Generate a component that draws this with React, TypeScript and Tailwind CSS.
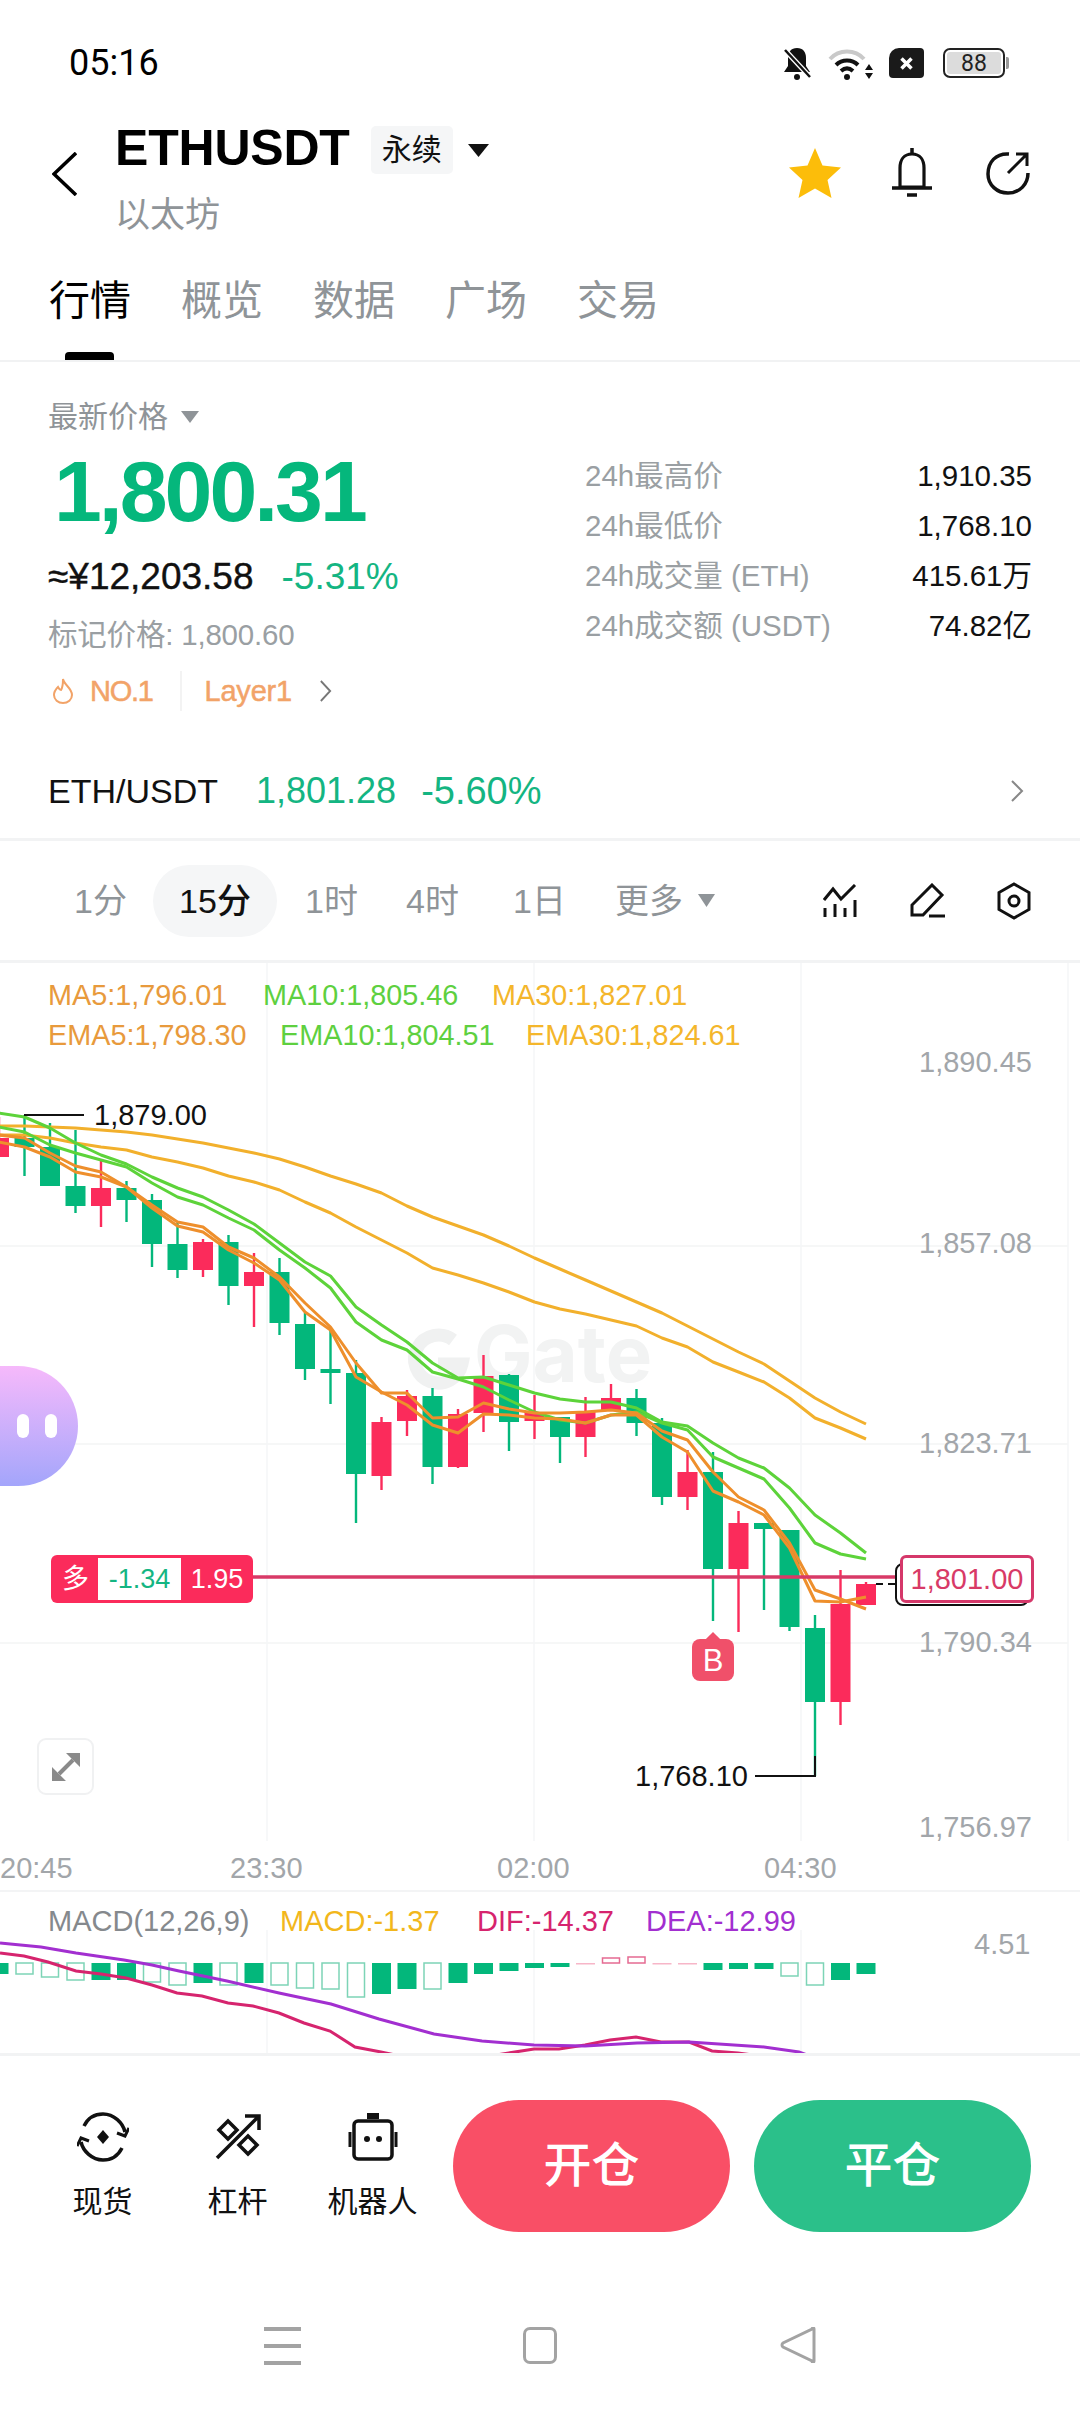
const UP = "#03b77b";
const DOWN = "#fb2b5b";

const slot = (i: number) => i * 25.5 - 1;

// [high, bodyTop, bodyBottom, low, colour]
const candles: [number, number, number, number, "g" | "r"][] = [
  [1117, 1138, 1157, 1157, "r"],
  [1115, 1138, 1147, 1176, "g"],
  [1123, 1147, 1186, 1186, "g"],
  [1130, 1186, 1206, 1213, "g"],
  [1160, 1188, 1206, 1227, "r"],
  [1181, 1188, 1200, 1222, "g"],
  [1194, 1200, 1244, 1267, "g"],
  [1223, 1244, 1270, 1278, "g"],
  [1239, 1242, 1270, 1277, "r"],
  [1235, 1242, 1286, 1305, "g"],
  [1253, 1272, 1286, 1327, "r"],
  [1258, 1272, 1323, 1335, "g"],
  [1313, 1324, 1369, 1380, "g"],
  [1327, 1369, 1373, 1404, "g"],
  [1360, 1373, 1474, 1523, "g"],
  [1417, 1422, 1476, 1490, "r"],
  [1390, 1396, 1421, 1436, "r"],
  [1388, 1396, 1467, 1484, "g"],
  [1409, 1414, 1467, 1468, "r"],
  [1355, 1376, 1413, 1432, "r"],
  [1374, 1375, 1422, 1451, "g"],
  [1395, 1412, 1421, 1439, "r"],
  [1417, 1417, 1437, 1463, "g"],
  [1397, 1411, 1437, 1457, "r"],
  [1384, 1398, 1410, 1410, "r"],
  [1389, 1398, 1423, 1436, "g"],
  [1418, 1423, 1497, 1505, "g"],
  [1450, 1472, 1497, 1510, "r"],
  [1452, 1472, 1569, 1621, "g"],
  [1511, 1523, 1569, 1632, "r"],
  [1523, 1523, 1529, 1610, "g"],
  [1530, 1530, 1627, 1631, "g"],
  [1615, 1628, 1702, 1776, "g"],
  [1570, 1604, 1702, 1725, "r"],
  [1582, 1584, 1605, 1605, "r"],
];

const maLines: { color: string; ys: number[] }[] = [
  {
    color: "#f2b02c",
    ys: [1126, 1126, 1127, 1128, 1130, 1132, 1135, 1139, 1143, 1148, 1153, 1159, 1167, 1176, 1184, 1193, 1206, 1217, 1226, 1235, 1246, 1258, 1269, 1280, 1291, 1302, 1313, 1326, 1339, 1352, 1364, 1381, 1398, 1412, 1424],
  },
  {
    color: "#f2b02c",
    ys: [1135, 1135, 1138, 1143, 1147, 1150, 1157, 1162, 1168, 1176, 1182, 1190, 1202, 1213, 1227, 1240, 1253, 1268, 1275, 1283, 1292, 1302, 1309, 1314, 1320, 1326, 1338, 1347, 1362, 1372, 1382, 1398, 1418, 1428, 1439],
  },
  {
    color: "#5dd33a",
    ys: [1113, 1117, 1128, 1143, 1155, 1164, 1177, 1188, 1197, 1210, 1224, 1243, 1262, 1276, 1307, 1325, 1342, 1363, 1378, 1377, 1385, 1393, 1399, 1402, 1402, 1408, 1422, 1426, 1443, 1458, 1468, 1488, 1515, 1533, 1553],
  },
  {
    color: "#5dd33a",
    ys: [1127, 1132, 1145, 1153, 1160, 1167, 1183, 1197, 1205, 1218, 1230, 1250, 1268, 1288, 1322, 1340, 1350, 1372, 1379, 1387, 1400, 1412, 1420, 1423, 1415, 1412, 1423, 1430, 1457, 1468, 1479, 1508, 1543, 1554, 1559],
  },
  {
    color: "#ee8f2c",
    ys: [1135, 1138, 1153, 1166, 1172, 1187, 1205, 1222, 1227, 1247, 1258, 1277, 1303, 1327, 1363, 1393, 1393, 1418, 1417, 1403, 1409, 1413, 1413, 1412, 1410, 1413, 1431, 1440, 1472, 1497, 1510, 1543, 1590, 1599, 1609],
  },
  {
    color: "#ee8f2c",
    ys: [1142, 1147, 1157, 1172, 1177, 1187, 1208, 1226, 1232, 1250, 1263, 1280, 1312, 1330, 1377, 1392, 1405, 1425, 1433, 1414, 1415, 1418, 1419, 1423, 1415, 1415, 1437, 1452, 1491, 1502, 1515, 1548, 1601, 1602, 1597],
  },
];

// height below (or above, when up) the zero line, solid or outlined
const macdBars: { h: number; solid?: boolean; up?: boolean; thin?: boolean }[] = [
  { h: 11, solid: true }, { h: 11 }, { h: 14 }, { h: 17 }, { h: 17, solid: true }, { h: 17, solid: true },
  { h: 19 }, { h: 22 }, { h: 20, solid: true }, { h: 22 }, { h: 20, solid: true }, { h: 22 }, { h: 25 },
  { h: 26 }, { h: 34 }, { h: 31, solid: true }, { h: 26, solid: true }, { h: 26 }, { h: 20, solid: true },
  { h: 11, solid: true }, { h: 8, solid: true }, { h: 5, solid: true }, { h: 4, solid: true },
  { h: 1, thin: true }, { h: 5, up: true }, { h: 6, up: true }, { h: 1, thin: true }, { h: 1, thin: true },
  { h: 7, solid: true }, { h: 6, solid: true }, { h: 6, solid: true }, { h: 13 }, { h: 22 },
  { h: 17, solid: true }, { h: 11, solid: true },
];

const dea = "0,1943 41,1947 76,1953 124,1960 152,1965 179,1971 227,1981 279,1993 331,2004 379,2019 434,2034 482,2041 534,2045 585,2046 637,2043 689,2042 764,2047 799,2052 810,2056";
const dif = "0,1953 24,1956 48,1962 76,1971 101,1974 126,1978 152,1985 177,1993 202,1996 228,2003 253,2006 279,2013 304,2023 330,2031 355,2047 381,2052 400,2056 490,2056 534,2049 559,2049 585,2045 610,2040 636,2037 661,2042 689,2042 712,2051 738,2053 760,2056";

const stats = [
  ["24h最高价", "1,910.35"],
  ["24h最低价", "1,768.10"],
  ["24h成交量 (ETH)", "415.61万"],
  ["24h成交额 (USDT)", "74.82亿"],
];

function Triangle({ className }: { className: string }) {
  return (
    <svg viewBox="0 0 20 14" preserveAspectRatio="none" className={className}>
      <path d="M0 0h20L10 14z" fill="currentColor" />
    </svg>
  );
}

function Chevron({ className }: { className: string }) {
  return (
    <svg viewBox="0 0 14 22" fill="none" preserveAspectRatio="none" className={className}>
      <path d="M2 1l10 10L2 21" stroke="currentColor" strokeWidth="2" />
    </svg>
  );
}

function StatusBar() {
  return (
    <div className="flex h-[126px] items-center justify-between pl-[69px] pr-[75px]">
      <span className="text-[36px] leading-none text-black font-['Roboto',sans-serif]">05:16</span>
      <div className="flex items-center">
        <svg viewBox="0 0 32 34" className="h-[34px] w-[32px]">
          <path d="M16 2c-6 0-9 4-9 10v8l-4 6h26l-4-6v-8c0-6-3-10-9-10z" fill="#111" />
          <circle cx="16" cy="31" r="3" fill="#111" />
          <path d="M3 3l26 28" stroke="#fff" strokeWidth="5" />
          <path d="M4 4l25 27" stroke="#111" strokeWidth="2.5" />
        </svg>
        <svg viewBox="0 0 48 34" className="ml-[15px] h-[34px] w-[48px]">
          <path d="M2 13C11 3 27 3 36 13" fill="none" stroke="#c9c9c9" strokeWidth="4" />
          <path d="M8 19c6-6 16-6 22 0" fill="none" stroke="#111" strokeWidth="4" />
          <path d="M13 25c4-3.500 8-3.500 12 0" fill="none" stroke="#111" strokeWidth="4" />
          <circle cx="19" cy="31" r="3" fill="#111" />
          <path d="M37 24l4-6 4 6zM37 27l4 6 4-6z" fill="#111" />
        </svg>
        <div className="ml-[13px] flex h-[30px] w-[35px] items-center justify-center rounded-[4px] rounded-tl-[10px] bg-[#1a1a1a]">
          <svg viewBox="0 0 12 12" className="h-[15px] w-[15px]">
            <path d="M2 2l8 8M10 2l-8 8" stroke="#fff" strokeWidth="2.8" />
          </svg>
        </div>
        <div className="relative ml-[19px] flex h-[30px] w-[62px] items-center justify-center rounded-[7px] border-2 border-[#222] p-[2px]">
          <div className="flex h-full w-full items-center justify-center rounded-[3px] bg-[#dcdcdc] text-[23px] leading-none text-[#222] font-['Roboto',sans-serif]">
            88
          </div>
          <div className="absolute right-[-6px] h-[12px] w-[3px] rounded-r-[2px] bg-[#999]" />
        </div>
      </div>
    </div>
  );
}

function Header() {
  return (
    <div className="flex h-[110px] items-start justify-between pl-[52px] pr-[50px]">
      <div className="flex">
        <svg viewBox="0 0 25 44" fill="none" className="mt-[26px] h-[44px] w-[25px] text-black">
          <path d="M24 1L2 22l22 21" stroke="currentColor" strokeWidth="3.500" />
        </svg>
        <div className="ml-[38px]">
          <div className="flex h-[48px] items-center">
            <span className="pb-[5px] text-[50px] leading-none font-bold tracking-[-0.2px] text-black">ETHUSDT</span>
            <span className="ml-[21px] flex h-[48px] w-[82px] items-center justify-center rounded-[5px] bg-[#f5f6f7] text-[30px] leading-none text-[#111]">
              永续
            </span>
            <Triangle className="ml-[15px] h-[13px] w-[21px] text-[#111]" />
          </div>
          <div className="mt-[23px] text-[35px] leading-[35px] text-[#8f9498]">以太坊</div>
        </div>
      </div>
      <div className="mt-[22px] flex items-center">
        <svg viewBox="0 0 52 50" className="h-[50px] w-[52px]">
          <path d="M26 0l7.500 17.500L52 19.500 38.500 32 42.500 50 26 40.500 9.500 50l4-18L0 19.500l18.500-2z" fill="#fcbd0a" />
        </svg>
        <svg viewBox="0 0 42 50" fill="none" className="ml-[50px] h-[50px] w-[42px]">
          <path d="M21 6C13 6 9 12 9 20v19h24V20c0-8-4-14-12-14z" stroke="#111" strokeWidth="3.200" />
          <path d="M21 0v6M1 40h40M16 47h10" stroke="#111" strokeWidth="3.500" />
        </svg>
        <svg viewBox="0 0 44 44" fill="none" className="ml-[53px] h-[44px] w-[44px]">
          <path d="M23 3C10 2 2 11 2 23c0 11 9 19 20 19 12 0 20-9 20-20" stroke="#111" strokeWidth="3.500" />
          <path d="M22 22L41 3M30 3h11v12" stroke="#111" strokeWidth="3" />
        </svg>
      </div>
    </div>
  );
}

function Tabs() {
  const items = ["行情", "概览", "数据", "广场", "交易"];
  return (
    <div className="relative flex h-[126px] gap-[50px] border-b-2 border-[#f1f2f3] pl-[49px] pt-[45px]">
      {items.map((t, i) => (
        <span key={t} className={`text-[41px] leading-[40px] ${i === 0 ? "text-black" : "text-[#8f9498]"}`}>
          {t}
        </span>
      ))}
      <div className="absolute bottom-0 left-[65px] h-[8px] w-[49px] rounded-t-[4px] bg-black" />
    </div>
  );
}

function PriceInfo() {
  return (
    <div className="flex h-[388px] justify-between pl-[48px] pr-[48px]">
      <div>
        <div className="mt-[40px] flex h-[30px] items-center">
          <span className="text-[30px] leading-none text-[#8f9498]">最新价格</span>
          <Triangle className="ml-[13px] h-[12px] w-[18px] text-[#8f9498]" />
        </div>
        <div className="mt-[16px] ml-[6px] text-[86px] leading-[86px] font-bold tracking-[-3px] text-[#05b77c]">
          1,800.31
        </div>
        <div className="mt-[22px] flex h-[40px] items-center text-[37px] leading-none">
          <span className="text-[#111] [-webkit-text-stroke:0.4px_#111]">≈¥12,203.58</span>
          <span className="ml-[28px] text-[#14b582]">-5.31%</span>
        </div>
        <div className="mt-[22px] h-[34px] text-[29.5px] leading-[34px] tracking-[-0.2px] text-[#9a9fa3]">标记价格: 1,800.60</div>
        <div className="mt-[19px] flex h-[40px] items-center text-[29px] leading-none text-[#f2a368]">
          <svg viewBox="0 0 22 26" fill="none" className="ml-[4px] h-[26px] w-[22px]">
            <path d="M11 1c1 6 9 9 9 16a9 8 0 0 1-18 0c0-4 2-6 4-8 1 2 2 3 3 3 2-3 2-7 2-11z" stroke="#f2a368" strokeWidth="2" />
          </svg>
          <span className="ml-[16px] tracking-[-1.300px] [-webkit-text-stroke:0.5px_#f2a368]">NO.1</span>
          <span className="ml-[27px] h-[40px] w-[2px] bg-[#f3f3f3]" />
          <span className="ml-[23px] tracking-[-0.2px] [-webkit-text-stroke:0.5px_#f2a368]">Layer1</span>
          <Chevron className="ml-[27px] h-[22px] w-[13px] text-[#777]" />
        </div>
      </div>
      <div className="mt-[89px] w-[447px]">
        {stats.map(([label, value]) => (
          <div key={label} className="flex h-[50px] items-center justify-between text-[29.5px] leading-none">
            <span className="text-[#9a9fa3]">{label}</span>
            <span className="text-[#111]">{value}</span>
          </div>
        ))}
      </div>
    </div>
  );
}

function SpotRow() {
  return (
    <div className="flex h-[91px] items-center border-b-[3px] border-[#f2f3f4] pb-[6px] pl-[48px] pr-[56px] leading-none">
      <span className="text-[34px] text-[#111]">ETH/USDT</span>
      <span className="ml-[38px] text-[36px] text-[#14b582]">1,801.28</span>
      <span className="ml-[25px] text-[38px] text-[#14b582]">-5.60%</span>
      <Chevron className="ml-auto h-[22px] w-[14px] text-[#888]" />
    </div>
  );
}

function IntervalBar() {
  return (
    <div className="flex h-[122px] items-center whitespace-nowrap border-b-[3px] border-[#f2f3f4] pr-[49px] text-[34px] leading-none text-[#8f9498]">
      <span className="ml-[74px] w-[52px]">1分</span>
      <span className="ml-[27px] flex h-[72px] w-[124px] items-center justify-center rounded-full bg-[#f5f6f7] font-medium text-[#111]">
        15分
      </span>
      <span className="ml-[28px] w-[52px]">1时</span>
      <span className="ml-[49px] w-[54px]">4时</span>
      <span className="ml-[53px] w-[50px]">1日</span>
      <span className="ml-[52px]">更多</span>
      <Triangle className="ml-[15px] h-[13px] w-[17px] text-[#8f9498]" />
      <svg viewBox="0 0 34 34" fill="none" className="ml-auto h-[34px] w-[34px]">
        <path d="M1 16L10 5l8 10L32 1" stroke="#111" strokeWidth="3" />
        <path d="M2 24v9M12 20v13M22 24v9M32 16v17" stroke="#111" strokeWidth="3" />
      </svg>
      <svg viewBox="0 0 36 36" fill="none" className="ml-[52px] h-[36px] w-[36px]">
        <path d="M23 2l10 10-19 20H3V22z" stroke="#111" strokeWidth="3" />
        <path d="M20 33h16" stroke="#111" strokeWidth="3" />
      </svg>
      <svg viewBox="0 0 34 38" fill="none" className="ml-[52px] h-[38px] w-[34px]">
        <path d="M17 2l15 8.500v17L17 36 2 27.500v-17z" stroke="#111" strokeWidth="3" />
        <circle cx="17" cy="19" r="5" stroke="#111" strokeWidth="3" />
      </svg>
    </div>
  );
}

function Legend({ left, color, children }: { left: string; color: string; children: string }) {
  return <span className={`${left} ${color}`}>{children}</span>;
}

function CandleChart() {
  return (
    <div className="relative h-[878px]">
      <svg viewBox="0 963 1080 878" className="absolute inset-0 h-[878px] w-[1080px]">
        {[1246, 1444, 1643].map((y) => (
          <line key={y} x1="0" x2="1068" y1={y} y2={y} stroke="#f3f4f5" strokeWidth="1.500" />
        ))}
        {[267, 534, 801, 1068].map((x) => (
          <line key={x} x1={x} x2={x} y1="963" y2="1841" stroke="#f5f6f7" strokeWidth="1.500" />
        ))}
        {/* watermark */}
        <path d="M453 1340a24 24 0 1 0 9 24h-24" fill="none" stroke="#f0f1f1" strokeWidth="13" />
        <text x="474" y="1382" fontSize="78" fontWeight="700" fill="#f2f3f3" fontFamily="Inter, sans-serif">
          Gate
        </text>
        {candles.map(([hi, top, bottom, lo, c], i) => {
          const fill = c === "g" ? UP : DOWN;
          return (
            <g key={i} fill={fill}>
              <rect x={slot(i) - 1.2} y={hi} width="2.400" height={lo - hi} />
              <rect x={slot(i) - 10} y={top} width="20" height={bottom - top} />
            </g>
          );
        })}
        {maLines.map((l, i) => (
          <polyline
            key={i}
            points={l.ys.map((y, k) => `${slot(k)},${y}`).join(" ")}
            fill="none"
            stroke={l.color}
            strokeWidth="3"
            strokeLinejoin="round"
          />
        ))}
        <path d="M24 1115h60M755 1776h60v-20" fill="none" stroke="#111" strokeWidth="2" />
        <path d="M253 1577H900" stroke="#d83a67" strokeWidth="3.500" />
        <path d="M876 1584h19" stroke="#111" strokeWidth="2" strokeDasharray="7 5" />
      </svg>

      <div className="relative flex flex-col gap-[11px] pl-[48px] pt-[18px] text-[28.8px] leading-[29px]">
        <div className="flex">
          <Legend left="w-[215px]" color="text-[#e89a3c]">MA5:1,796.01</Legend>
          <Legend left="w-[229px]" color="text-[#5ed040]">MA10:1,805.46</Legend>
          <Legend left="" color="text-[#f4b62b]">MA30:1,827.01</Legend>
        </div>
        <div className="flex">
          <Legend left="w-[232px]" color="text-[#e89a3c]">EMA5:1,798.30</Legend>
          <Legend left="w-[246px]" color="text-[#5ed040]">EMA10:1,804.51</Legend>
          <Legend left="" color="text-[#f4b62b]">EMA30:1,824.61</Legend>
        </div>
      </div>

      {/* price axis */}
      <span className="absolute left-[919px] top-[85px] text-[29px] leading-[28px] text-[#a2a6aa]">1,890.45</span>
      <span className="absolute left-[919px] top-[266px] text-[29px] leading-[28px] text-[#a2a6aa]">1,857.08</span>
      <span className="absolute left-[919px] top-[466px] text-[29px] leading-[28px] text-[#a2a6aa]">1,823.71</span>
      <span className="absolute left-[919px] top-[665px] text-[29px] leading-[28px] text-[#a2a6aa]">1,790.34</span>
      <span className="absolute left-[919px] top-[850px] text-[29px] leading-[28px] text-[#a2a6aa]">1,756.97</span>

      <span className="absolute left-[94px] top-[138px] text-[29px] leading-[28px] text-[#111]">1,879.00</span>
      <span className="absolute left-[635px] top-[799px] text-[29px] leading-[28px] text-[#111]">1,768.10</span>

      {/* assistant bubble */}
      <div className="absolute left-0 top-[403px] flex h-[120px] w-[78px] items-center gap-[16px] rounded-r-[60px] bg-gradient-to-b from-[#f6b9fb] to-[#a3a5fb] pl-[17px]">
        <span className="h-[24px] w-[12px] rounded-full bg-white" />
        <span className="h-[24px] w-[12px] rounded-full bg-white" />
      </div>

      {/* open position tag */}
      <div className="absolute left-[51px] top-[592px] flex h-[48px] w-[202px] items-center rounded-[6px] bg-[#fb2b5b] text-[27px] leading-none text-white">
        <span className="w-[47px] pl-[2px] text-center">多</span>
        <span className="flex h-[42px] w-[83px] items-center justify-center bg-white text-[#14b582]">-1.34</span>
        <span className="flex-1 text-center">1.95</span>
      </div>

      {/* last price tag, black one sits behind */}
      <div className="absolute left-[895px] top-[600px] h-[43px] w-[134px] rounded-[8px] border-2 border-[#111] bg-white" />
      <div className="absolute left-[900px] top-[592px] flex h-[48px] w-[134px] items-center justify-center rounded-[6px] border-[3px] border-[#d5386a] bg-white text-[29px] leading-none text-[#d83a67]">
        1,801.00
      </div>

      {/* buy marker */}
      <div className="absolute left-[692px] top-[676px] flex h-[42px] w-[42px] items-center justify-center rounded-[8px] bg-[#f0506a] text-[31px] leading-none text-white">
        B
        <span className="absolute top-[-5px] h-[10px] w-[10px] rotate-45 bg-[#f0506a]" />
      </div>

      <div className="absolute left-[37px] top-[775px] flex h-[57px] w-[57px] items-center justify-center rounded-[9px] border-2 border-[#f0f1f2] bg-white">
        <svg viewBox="0 0 28 28" className="h-[28px] w-[28px]">
          <path d="M14 0h14v14zM0 14v14h14z" fill="#8a8a8a" />
          <path d="M21 7L7 21" stroke="#8a8a8a" strokeWidth="4" />
        </svg>
      </div>
    </div>
  );
}

function MacdPanel() {
  return (
    <div className="relative h-[161px] overflow-hidden">
      <svg viewBox="0 1892 1080 161" className="absolute inset-0 h-[161px] w-[1080px]">
        {[267, 534, 801].map((x) => (
          <line key={x} x1={x} x2={x} y1="1930" y2="2053" stroke="#f5f6f7" strokeWidth="1.500" />
        ))}
        {macdBars.map((b, i) => {
          const x = slot(i) - 9.500;
          if (b.thin) return <rect key={i} x={x} y="1963" width="19" height="1.500" fill="#f7b6c8" />;
          if (b.up)
            return <rect key={i} x={x + 1} y={1963 - b.h} width="17" height={b.h} fill="#fff" stroke="#e56b92" strokeWidth="1.500" />;
          if (b.solid) return <rect key={i} x={x} y="1963" width="19" height={b.h} fill={UP} />;
          return <rect key={i} x={x + 1} y="1963" width="17" height={b.h} fill="#fff" stroke="#7dd4b6" strokeWidth="1.500" />;
        })}
        <polyline points={dif} fill="none" stroke="#d6246e" strokeWidth="3" />
        <polyline points={dea} fill="none" stroke="#a22fd0" strokeWidth="3" />
      </svg>
      <div className="relative flex pl-[48px] pt-[15px] text-[29px] leading-[28px]">
        <span className="w-[232px] text-[#85898d]">MACD(12,26,9)</span>
        <span className="w-[197px] text-[#f2b71c]">MACD:-1.37</span>
        <span className="w-[169px] text-[#d6246e]">DIF:-14.37</span>
        <span className="text-[#a22fd0]">DEA:-12.99</span>
      </div>
      <span className="absolute left-[974px] top-[38px] text-[29px] leading-[28px] text-[#a2a6aa]">4.51</span>
    </div>
  );
}

function ActionBar() {
  const tools = [
    {
      label: "现货",
      icon: (
        <svg viewBox="0 0 52 50" fill="none" className="h-[50px] w-[52px]">
          <path d="M7 14C11 6 18 2 26 2c11 0 20 9 22 18M45 36c-4 8-11 12-19 12C15 48 6 39 4 30" stroke="#111" strokeWidth="3.500" />
          <path d="M40 21l8 3 4-8M12 29l-8-3-4 8" stroke="#111" strokeWidth="3" />
          <path d="M26 18l6 7-6 7-6-7z" fill="#111" />
        </svg>
      ),
    },
    {
      label: "杠杆",
      icon: (
        <svg viewBox="0 0 46 46" fill="none" className="h-[46px] w-[46px]">
          <path d="M2 44L44 2M30 2h14v14" stroke="#111" strokeWidth="3.500" />
          <path d="M13 7l9 9-9 9-9-9zM33 22l9 9-9 9-9-9z" stroke="#111" strokeWidth="3.500" />
        </svg>
      ),
    },
    {
      label: "机器人",
      icon: (
        <svg viewBox="0 0 50 48" fill="none" className="h-[48px] w-[50px]">
          <path d="M19 0h12v6H19z" fill="#111" />
          <rect x="6" y="8" width="38" height="38" rx="4" stroke="#111" strokeWidth="3.500" />
          <path d="M2 19v15M48 19v15" stroke="#111" strokeWidth="3" />
          <circle cx="19" cy="26" r="3" fill="#111" />
          <circle cx="31" cy="26" r="3" fill="#111" />
        </svg>
      ),
    },
  ];
  return (
    <div className="flex h-[258px] border-t-[3px] border-[#f2f3f4] pt-[44px]">
      <div className="ml-[35px] flex w-[405px]">
        {tools.map((t) => (
          <div key={t.label} className="flex w-[135px] flex-col items-center">
            <div className="flex h-[60px] items-center justify-center pt-[14px]">{t.icon}</div>
            <span className="mt-[28px] text-[30px] leading-[28px] text-[#111]">{t.label}</span>
          </div>
        ))}
      </div>
      <button className="ml-[13px] flex h-[132px] w-[277px] items-center justify-center rounded-full bg-[#f94f66] text-[48px] leading-none font-medium text-white">
        开仓
      </button>
      <button className="ml-[24px] flex h-[132px] w-[277px] items-center justify-center rounded-full bg-[#2bc08a] text-[48px] leading-none font-medium text-white">
        平仓
      </button>
    </div>
  );
}

function NavBar() {
  return (
    <div className="flex flex-1 items-start pl-[264px] pt-[16px]">
      <div className="flex h-[38px] w-[37px] flex-col justify-between">
        <span className="h-[4px] bg-[#a3a3a3]" />
        <span className="h-[4px] bg-[#a3a3a3]" />
        <span className="h-[4px] bg-[#a3a3a3]" />
      </div>
      <div className="ml-[222px] h-[37px] w-[34px] rounded-[7px] border-[3px] border-[#a3a3a3]" />
      <svg viewBox="0 0 36 36" fill="none" className="ml-[223px] h-[36px] w-[36px]">
        <path d="M34 2v32a1 1 0 0 1-2 0L3 20a2.500 2.500 0 0 1 0-4L32 2a1 1 0 0 1 2 0z" stroke="#a3a3a3" strokeWidth="3" />
      </svg>
    </div>
  );
}

export default function App() {
  return (
    <div className="flex h-[2412px] w-[1080px] flex-col overflow-hidden bg-white font-['Liberation_Sans','Noto_Sans_CJK_SC',sans-serif]">
      <StatusBar />
      <Header />
      <Tabs />
      <PriceInfo />
      <SpotRow />
      <IntervalBar />
      <CandleChart />
      <div className="relative h-[51px] border-b-2 border-[#f3f4f5] text-[29px] leading-[28px] text-[#a2a6aa]">
        <span className="absolute left-0 top-[13px]">20:45</span>
        <span className="absolute left-[230px] top-[13px]">23:30</span>
        <span className="absolute left-[497px] top-[13px]">02:00</span>
        <span className="absolute left-[764px] top-[13px]">04:30</span>
      </div>
      <MacdPanel />
      <ActionBar />
      <NavBar />
    </div>
  );
}
